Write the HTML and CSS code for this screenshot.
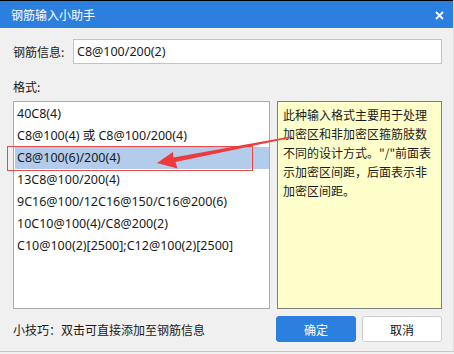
FILE: index.html
```html
<!DOCTYPE html>
<html>
  <head>
    <meta charset="utf-8">
    <title>钢筋输入小助手</title>
    <link rel="stylesheet" href="styles.css">
  </head>
  <body>
    <div class="dialog">
      <div class="titlebar">
        <span class="title">钢筋输入小助手</span>
        <svg class="close" width="9" height="9" viewBox="0 0 9 9">
          <path d="M1 1 L8 8 M8 1 L1 8" stroke="#fff" stroke-width="1.8" fill="none"/>
        </svg>
      </div>

      <div class="content">
        <div class="field-row">
          <label for="rebar-input">钢筋信息:</label>
          <input id="rebar-input" type="text" value="C8@100/200(2)">
        </div>

        <div class="section-label">格式:</div>

        <div class="main">
          <ul class="format-list">
            <li>40C8(4)</li>
            <li>C8@100(4) 或 C8@100/200(4)</li>
            <li class="selected">C8@100(6)/200(4)</li>
            <li>13C8@100/200(4)</li>
            <li>9C16@100/12C16@150/C16@200(6)</li>
            <li>10C10@100(4)/C8@200(2)</li>
            <li>C10@100(2)[2500];C12@100(2)[2500]</li>
          </ul>
          <div class="hint">
            此种输入格式主要用于处理<br>加密区和非加密区箍筋肢数<br>不同的设计方式。"/"前面表<br>示加密区间距，后面表示非<br>加密区间距。
          </div>
        </div>

        <div class="footer">
          <span class="tip">小技巧：双击可直接添加至钢筋信息</span>
          <div class="buttons">
            <button class="btn btn-primary">确定</button>
            <button class="btn">取消</button>
          </div>
        </div>
      </div>

      <!-- annotation drawn over the dialog -->
      <div class="mark-box"></div>
      <svg class="mark-arrow" width="454" height="354" viewBox="0 0 454 354">
        <polygon fill="#ee3a3a" points="157,163 173,152 173.5,157.5 292,136.2 292.4,137.4 175.5,162 177.5,168.5"/>
      </svg>
    </div>
  </body>
</html>
```

FILE: styles.css
```css
* {
  box-sizing: border-box;
}

body {
  margin: 0;
  background: #f0f0f0;
  font-family: "Noto Sans", "Noto Sans CJK SC", sans-serif;
  font-size: 12px;
  color: #1a1a1a;
}

.dialog {
  position: relative;
  width: 454px;
  height: 352px;
  background: #f0f0f0;
  border-bottom: 1px solid #c6c6c6;
  border-right: 1px solid #dcdcdc;
}

.titlebar {
  height: 28px;
  border-top: 1px solid #000;
  background: #2b7fde;
  display: flex;
  align-items: center;
  justify-content: space-between;
  padding: 0 9px 0 11px;
}

.title {
  color: #fff;
  font-family: "Noto Sans CJK SC", sans-serif;
  font-size: 12px;
  line-height: 16px;
}

.close {
  display: block;
  margin-top: 1px;
}

.content {
  padding: 11px 11px 0 13px;
}

.field-row {
  display: flex;
  align-items: center;
  height: 25px;
}

.field-row label {
  width: 60px;
  font-family: "Noto Sans CJK SC", sans-serif;
}

.field-row input {
  flex: 1;
  height: 25px;
  border: 1px solid #c3c3c3;
  background: #fff;
  padding: 0 3px;
  font-family: "Noto Sans", "Noto Sans CJK SC", sans-serif;
  font-size: 12.5px;
  color: #1a1a1a;
  outline: none;
}

.section-label {
  margin-top: 15px;
  line-height: 16px;
  height: 16px;
  font-family: "Noto Sans CJK SC", sans-serif;
}

.main {
  margin-top: 6px;
  height: 208px;
  display: flex;
  gap: 7px;
}

.format-list {
  width: 257px;
  margin: 0;
  list-style: none;
  background: #fff;
  border: 1px solid #acacac;
  padding: 1px 0 1px 1px;
}

.format-list li {
  height: 22px;
  line-height: 22px;
  padding-left: 2px;
  font-size: 12.5px;
  white-space: nowrap;
}

.format-list li.selected {
  background: #b3ccec;
  margin-right: 0;
}

.hint {
  width: 165px;
  background: #ffffcc;
  border: 1px solid #7f7f7f;
  padding: 3px 5px;
  line-height: 19px;
  font-family: "Noto Sans CJK SC", sans-serif;
  white-space: nowrap;
}

.footer {
  margin-top: 7px;
  display: flex;
  align-items: center;
  justify-content: space-between;
}

.tip {
  font-family: "Noto Sans CJK SC", sans-serif;
}

.buttons {
  display: flex;
  gap: 6px;
}

.btn {
  width: 80px;
  height: 26px;
  border: 1px solid #cfcfcf;
  border-radius: 3px;
  background: #fff;
  color: #111;
  font-family: "Noto Sans CJK SC", sans-serif;
  font-size: 12px;
  padding: 0;
}

.btn-primary {
  background: #2b7fde;
  border-color: #2b7fde;
  color: #fff;
}

.mark-box {
  position: absolute;
  left: 7px;
  top: 146px;
  width: 246px;
  height: 25px;
  border: 1px solid #e84a4a;
}

.mark-arrow {
  position: absolute;
  left: 0;
  top: 0;
  pointer-events: none;
}
```
